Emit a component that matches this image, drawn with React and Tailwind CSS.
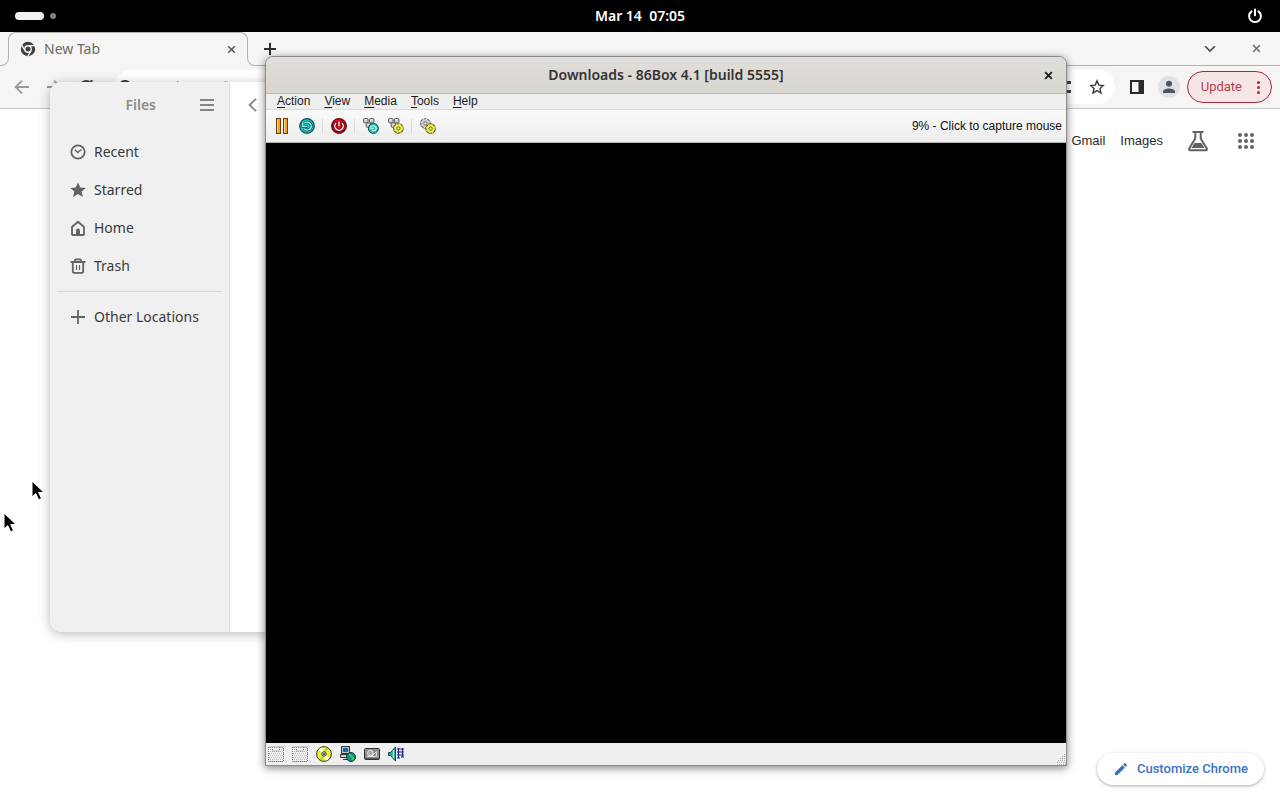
const UI = "font-['Noto_Sans',sans-serif]"
const QT = "font-['Liberation_Sans',Arial,sans-serif]"

function ChromeLogo() {
  return (
    <svg viewBox="0 0 16 16" className="w-4 h-4 shrink-0">
      <circle cx="8" cy="8" r="7.2" fill="#3c4043" />
      <circle cx="8" cy="8" r="3.9" fill="#f6f5f4" />
      <circle cx="8" cy="8" r="2.5" fill="#3c4043" />
      <path d="M8 4.6h6.6M5.1 9.8 1.8 4.2M11 9.8 7.8 15.2" stroke="#f6f5f4" strokeWidth="1.3" />
    </svg>
  )
}

function Cross({ className, width = 2 }) {
  return (
    <svg viewBox="0 0 10 10" className={className} fill="none" stroke="currentColor" strokeWidth={width}>
      <path d="M1.3 1.3l7.4 7.4M8.7 1.3 1.3 8.7" />
    </svg>
  )
}

function Pointer({ className }) {
  return (
    <svg viewBox="0 0 14 22" className={className}>
      <path d="M1 1v16l3.8-3.4 2.8 6.2 2.9-1.3-2.8-6H13z" fill="#000" stroke="#fff" strokeWidth="1" />
    </svg>
  )
}

function TopBar() {
  return (
    <header className="relative flex h-8 shrink-0 items-center justify-between bg-black px-4 text-white">
      <button aria-label="Activities" className="flex items-center gap-1.5">
        <span className="-ml-px h-2 w-[29px] rounded-full bg-[#f2f2f2]" />
        <span className="h-1.5 w-1.5 rounded-full bg-[#7f7f7f]" />
      </button>
      <button className="absolute left-1/2 -translate-x-1/2 whitespace-pre text-sm font-semibold">Mar 14  07:05</button>
      <button aria-label="System" className="mr-px">
        <svg viewBox="0 0 16 16" className="h-4 w-4" fill="none" stroke="currentColor" strokeWidth="2" strokeLinecap="round">
          <path d="M4.6 3.4a5.9 5.9 0 1 0 6.8 0M8 1.6v5.6" />
        </svg>
      </button>
    </header>
  )
}

function TabStrip() {
  return (
    <div className="flex h-[34px] shrink-0 bg-[#f6f5f4]">
      <span className="-mr-px h-2 w-[9px] self-end rounded-br-lg border-b border-r border-[#b3b0ad]" />
      <div className="flex h-[26px] w-[240px] items-start rounded-t-lg border-x border-t border-[#b3b0ad]">
        <div className="flex h-8 w-full items-center pl-[11px] pr-[11px]">
          <ChromeLogo />
          <span className="ml-2 flex-1 text-sm text-[#6a6a6a]">New Tab</span>
          <button aria-label="Close tab" className="text-[#555]"><Cross className="h-[9px] w-[9px]" width={1.6} /></button>
        </div>
      </div>
      <span className="-ml-px h-2 w-2 self-end rounded-bl-lg border-b border-l border-[#b3b0ad]" />
      <div className="flex flex-1 items-center justify-between border-b border-[#b3b0ad] pl-[9px] pr-[19px]">
        <button aria-label="New tab">
          <svg viewBox="0 0 12 12" className="h-3 w-3" stroke="#2e2e2e" strokeWidth="2"><path d="M6 0v12M0 6h12" /></svg>
        </button>
        <div className="flex items-center gap-9">
          <button aria-label="Search tabs">
            <svg viewBox="0 0 12 8" className="h-2 w-3" fill="none" stroke="#4a4a4a" strokeWidth="1.6"><path d="M1.2 1.2 6 6l4.8-4.8" /></svg>
          </button>
          <button aria-label="Close window" className="text-[#7b7b7b]"><Cross className="h-[9px] w-[9px]" width={1.8} /></button>
        </div>
      </div>
    </div>
  )
}

function Toolbar() {
  return (
    <div className="flex h-[43px] shrink-0 items-center border-b border-[#c9c7c5] bg-[#f6f5f4] pl-3.5 pr-2">
      <div className="flex gap-4 text-[#9a9996]">
        <button aria-label="Back">
          <svg viewBox="0 0 16 16" className="h-4 w-4" fill="none" stroke="currentColor" strokeWidth="1.8"><path d="M15 8H2M8 1.6 1.6 8 8 14.4" /></svg>
        </button>
        <button aria-label="Forward">
          <svg viewBox="0 0 16 16" className="h-4 w-4" fill="none" stroke="currentColor" strokeWidth="1.8"><path d="M1 8h13M8 1.6 14.4 8 8 14.4" /></svg>
        </button>
        <button aria-label="Reload" className="text-[#3c4043]">
          <svg viewBox="0 0 16 16" className="h-4 w-4" fill="none" stroke="currentColor" strokeWidth="2"><path d="M13.5 10.5A6 6 0 1 1 12.5 4M13.5 1v4.6H9" /></svg>
        </button>
      </div>
      <label className="ml-5 flex h-[34px] flex-1 items-center rounded-full bg-white pl-1 pr-2.5">
        <svg viewBox="0 0 14 14" className="h-3.5 w-3.5" fill="none" stroke="#3c4043" strokeWidth="2"><path d="M11.5 3.2A5.6 5.6 0 1 0 12.6 7H7.4" /></svg>
        <input aria-label="Address" placeholder="Search Google or type a URL" className="ml-2 min-w-0 flex-1 bg-transparent text-sm outline-none placeholder:text-[#80868b]" />
        <svg viewBox="0 0 14 16" className="mr-[18px] h-4 w-3.5" fill="none" stroke="#444" strokeWidth="3"><path d="M3 3.5h11M3 12.5h11" /></svg>
        <button aria-label="Bookmark this tab">
          <svg viewBox="0 0 16 16" className="h-4 w-4" fill="none" stroke="#3c3c3c" strokeWidth="1.4">
            <path d="M8 1.9l1.8 4.2 4.6.4-3.5 3 1.1 4.5L8 11.6 4 14l1.1-4.5-3.5-3 4.6-.4z" />
          </svg>
        </button>
      </label>
      <button aria-label="Side panel" className="ml-[15px]">
        <svg viewBox="0 0 14 14" className="h-3.5 w-3.5"><path d="M0 0h14v14H0zM2 2v10h6.5V2z" fill="#2b2b2b" fillRule="evenodd" /></svg>
      </button>
      <button aria-label="Profile" className="ml-3.5 flex h-[22px] w-[22px] items-center justify-center rounded-full bg-[#dfe1e5]">
        <svg viewBox="0 0 14 14" className="h-3.5 w-3.5" fill="#50555c"><circle cx="7" cy="3.8" r="3" /><path d="M1 13v-1.6C1 9.3 4.4 8.4 7 8.4s6 .9 6 3V13z" /></svg>
      </button>
      <button className="ml-[7px] flex h-8 items-center gap-[15px] rounded-full border border-[#a5283c] bg-[#f5e6e5] pl-[13px] pr-[11px] font-['Roboto',sans-serif] text-[13px] text-[#b3404f]">
        Update
        <svg viewBox="0 0 3 13" className="h-[13px] w-[3px]" fill="#a5283c"><circle cx="1.5" cy="1.5" r="1.5" /><circle cx="1.5" cy="6.5" r="1.5" /><circle cx="1.5" cy="11.5" r="1.5" /></svg>
      </button>
    </div>
  )
}

function NewTabPage() {
  return (
    <main className="flex flex-1 flex-col items-end justify-between bg-white pb-[15px] pr-4">
      <nav className={`flex items-center pr-[9px] pt-[21px] text-[13px] text-[#2a2a2a] ${QT}`}>
        <a href="#gmail" className="mr-[15px]">Gmail</a>
        <a href="#images">Images</a>
        <a href="#labs" aria-label="Search Labs" className="ml-6">
          <svg viewBox="0 0 22 22" className="h-[22px] w-[22px]" fill="none" stroke="#5f6368" strokeWidth="2" strokeLinejoin="round">
            <path d="M5.5 2h11M8.3 2v6.5L2.2 18.4c-.5 1 0 1.9 1 1.9h15.6c1 0 1.5-.9 1-1.9L13.7 8.5V2" />
            <path d="M7.6 13h6.8l3.2 5H4.4z" fill="#5f6368" stroke="none" />
          </svg>
        </a>
        <button aria-label="Google apps" className="ml-7">
          <svg viewBox="0 0 18 18" className="h-[18px] w-[18px]" fill="#5f6368">
            {[3, 9, 15].map(y => [3, 9, 15].map(x => <circle key={`${x}-${y}`} cx={x} cy={y} r="2" />))}
          </svg>
        </button>
      </nav>
      <button className="flex h-8 items-center gap-2 rounded-full bg-white px-4 font-['Roboto',sans-serif] text-[13px] font-medium text-[#3a72c4] shadow-[0_1px_3px_rgba(0,0,0,0.35)]">
        <svg viewBox="0 0 24 24" className="h-4 w-4" fill="currentColor"><path d="M3 17.25V21h3.75L17.8 9.94l-3.75-3.75zM20.7 7.04a1 1 0 0 0 0-1.41l-2.34-2.34a1 1 0 0 0-1.41 0l-1.83 1.83 3.75 3.75z" /></svg>
        Customize Chrome
      </button>
    </main>
  )
}

const places = [
  ['Recent', <g><circle cx="8" cy="8" r="6.7" /><path d="M4.8 5.8 7.8 8.6l3.6-3.2" strokeWidth="1.3" /></g>],
  ['Starred', <path d="M8 .4l2.3 5 5.5.5-4.2 3.6 1.3 5.5L8 12.1 3.1 15l1.3-5.5L.2 5.9l5.5-.5z" fill="currentColor" stroke="none" />],
  ['Home', <g><path d="M2 14.2V7l6-5.2L14 7v7.2c0 .4-.3.8-.8.8H2.8c-.5 0-.8-.4-.8-.8z" strokeLinejoin="round" /><path d="M6 15v-4.6a2 2 0 0 1 4 0V15z" fill="currentColor" stroke="none" /></g>],
  ['Trash', <g><path d="M.6 4h14.8M5 4V2.4c0-.6.4-1 1-1h4c.6 0 1 .4 1 1V4M2.8 4v9.2c0 .9.7 1.6 1.6 1.6h7.2c.9 0 1.6-.7 1.6-1.6V4" /><path d="M6.5 7v5M9.5 7v5" strokeWidth="1.2" /></g>],
]

function Place({ label, children }) {
  return (
    <a href="#place" className="flex h-[38px] items-center gap-2 px-5 text-sm text-[#3a3a3a]">
      <svg viewBox="0 0 16 16" className="h-4 w-4 text-[#636363]" fill="none" stroke="currentColor" strokeWidth="1.8">{children}</svg>
      {label}
    </a>
  )
}

function FilesWindow() {
  return (
    <section aria-label="Files" className="absolute bottom-[168px] left-[50px] right-[260px] top-[82px] flex overflow-hidden rounded-xl bg-white shadow-[0_2px_12px_rgba(0,0,0,0.28)]">
      <aside className="w-[180px] border-r border-[#dedede] bg-[#f0f0f0]">
        <div className="flex h-[46px] items-center justify-end gap-[44px] pr-[15px]">
          <h2 className="text-sm font-semibold text-[#8c8c8c]">Files</h2>
          <button aria-label="Main menu">
            <svg viewBox="0 0 14 12" className="h-3 w-3.5" stroke="#858585" strokeWidth="2"><path d="M0 1h14M0 6h14M0 11h14" /></svg>
          </button>
        </div>
        <nav className="pt-[5px]">
          {places.map(([label, icon]) => <Place key={label} label={label}>{icon}</Place>)}
          <hr className="mx-[7px] my-[6px] border-[#d6d6d6]" />
          <Place label="Other Locations"><path d="M8 1v14M1 8h14" /></Place>
        </nav>
      </aside>
      <button aria-label="Back" className="flex h-[46px] items-center pl-[18px]">
        <svg viewBox="0 0 9 14" className="h-3.5 w-[9px]" fill="none" stroke="#858585" strokeWidth="1.8"><path d="M8 .8 1.6 7 8 13.2" /></svg>
      </button>
    </section>
  )
}

function Gear({ x, y, fill, dark, light }) {
  return (
    <g>
      <circle cx={x} cy={y} r="4.7" fill={fill} stroke={dark} strokeWidth="1.1" />
      <circle cx={x} cy={y} r="4.2" fill="none" stroke={light} strokeWidth="1" strokeDasharray="1.6 1.7" />
      <circle cx={x} cy={y} r="1.6" fill="#fff" stroke={dark} strokeWidth="0.9" />
    </g>
  )
}

function Keycaps() {
  return (
    <g stroke="#4a4a4a" strokeWidth="0.9" fill="#c9c9c9">
      <rect x="0.5" y="0.5" width="4.6" height="4.4" rx="1.2" />
      <rect x="6.4" y="0.5" width="4.6" height="4.4" rx="1.2" />
      <rect x="3.2" y="5" width="4.6" height="4.4" rx="1.2" />
      <path d="M1.6 1.8h2M7.5 1.8h2M4.3 6.3h2" stroke="#fff" />
    </g>
  )
}

function ToolButton({ label, children }) {
  return (
    <button aria-label={label} className="flex h-6 w-6 items-center justify-center">
      <svg viewBox="0 0 16 16" className="h-4 w-4">{children}</svg>
    </button>
  )
}

function Separator() {
  return <span className="mx-[3px] h-3.5 w-0.5 border-l border-[#d9d9d9]" />
}

function EmuToolbar() {
  return (
    <div className="flex h-[33px] items-center justify-between border-b border-[#b5b5b5] bg-linear-to-b from-[#fafafa] to-[#ededed] px-1">
      <div className="flex items-center">
        <div className="flex gap-px">
          <ToolButton label="Pause">
            <rect x="2.5" y="0.5" width="4" height="15" fill="#f2a227" stroke="#6b3c08" />
            <rect x="9.5" y="0.5" width="4" height="15" fill="#f2a227" stroke="#6b3c08" />
            <path d="M3.5 1.5v13M10.5 1.5v13" stroke="#ffd77c" />
          </ToolButton>
          <ToolButton label="Hard reset">
            <circle cx="8" cy="8" r="7.3" fill="#22c0bd" stroke="#0b4f55" strokeWidth="1.2" />
            <path d="M3.8 4.2v4.2h4.6M5.4 4.8c3-1.8 6.9 0 6.9 3.4 0 3.6-4.6 5-7.4 2.6" fill="none" stroke="#0a555b" strokeWidth="2.8" />
            <path d="M3.8 4.2v4.2h4.6M5.4 4.8c3-1.8 6.9 0 6.9 3.4 0 3.6-4.6 5-7.4 2.6" fill="none" stroke="#a5f5f2" strokeWidth="1.3" />
          </ToolButton>
        </div>
        <Separator />
        <ToolButton label="ACPI shutdown">
          <circle cx="8" cy="8" r="7.3" fill="#cf1020" stroke="#5c0710" strokeWidth="1.3" />
          <path d="M5 5.2a4.2 4.2 0 1 0 6 0M8 3.4v4.8" fill="none" stroke="#6b0711" strokeWidth="3" />
          <path d="M5 5.2a4.2 4.2 0 1 0 6 0M8 3.4v4.8" fill="none" stroke="#fff" strokeWidth="1.4" />
        </ToolButton>
        <Separator />
        <div className="flex gap-px">
          <ToolButton label="Ctrl+Alt+Del">
            <Keycaps />
            <circle cx="10.4" cy="10.4" r="5" fill="#22c0bd" stroke="#0b4f55" />
            <path d="M8 7.8v2.6h2.8M9.2 8.2c1.9-1 4 .2 4 2.3 0 2.2-2.8 3-4.4 1.5" fill="none" stroke="#c9fbf8" strokeWidth="1.1" />
          </ToolButton>
          <ToolButton label="Ctrl+Alt+Esc">
            <Keycaps />
            <Gear x={10.4} y={10.4} fill="#f5f02a" dark="#4d4a0c" light="#ffff9a" />
          </ToolButton>
        </div>
        <Separator />
        <ToolButton label="Settings">
          <Gear x={5.4} y={5.4} fill="#cfcfcf" dark="#555" light="#fff" />
          <Gear x={10.6} y={10.6} fill="#f5f02a" dark="#4d4a0c" light="#ffff9a" />
        </ToolButton>
      </div>
      <span className="text-xs text-[#111]">9% - Click to capture mouse</span>
    </div>
  )
}

function EmptyFloppy() {
  return (
    <g fill="none" stroke="#777" strokeDasharray="1 1">
      <path d="M0 1.5h16M0 3.5h3M13 3.5h3M0 5.5h16M1 7.5h15M0 9.5h16M1 11.5h15M0 13.5h16M1 15.5h14" stroke="#bbb" />
      <path d="M.5 1v14.5h15V1zM4.5 1v4h7V1" />
    </g>
  )
}

const devices = [
  ['Floppy 1', <EmptyFloppy />],
  ['Floppy 2', <EmptyFloppy />],
  ['CD-ROM', <g>
    <circle cx="8" cy="8" r="7.4" fill="#eeee3c" stroke="#3b3b10" />
    <path d="M8 8 2.6 4A6.8 6.8 0 0 1 6 1.5zM8 8l5.4 4a6.8 6.8 0 0 1-3.4 2.5z" fill="#fff" />
    <path d="M8 8l2-6.5A6.8 6.8 0 0 1 12 2.8zM8 8l-2 6.5A6.8 6.8 0 0 1 4 13.2z" fill="#8fd04a" />
    <circle cx="8" cy="8" r="2.2" fill="#fff" stroke="#333" /><circle cx="8" cy="8" r="1" fill="#222" />
  </g>],
  ['Network', <g>
    <path d="M1.5.5h8v7h-8z" fill="#b9c3c9" stroke="#333" /><path d="M3 2h5v4H3z" fill="#176aa5" />
    <path d="M.5 8.5h8v3h-8zM3 13.5h4" fill="#ccc" stroke="#333" />
    <circle cx="11" cy="11" r="4.5" fill="#159084" stroke="#073e38" /><path d="M9 8.5c2 0 1.5 2 3 2.5s1 2 0 3" fill="none" stroke="#45d34b" strokeWidth="1.6" />
  </g>],
  ['Hard disk', <g>
    <rect x="0.5" y="2.5" width="15" height="11" rx="1" fill="#8c8c8c" stroke="#333" />
    <circle cx="6.3" cy="7" r="2.8" fill="#aaa" stroke="#e4e4e4" /><path d="M8 10l4.5-4.5v5H3" fill="none" stroke="#ddd" /><path d="M1 12.5h14" stroke="#555" />
  </g>],
  ['Sound', <g>
    <path d="M.5 6.5h2l5-5.5v14l-5-5.5h-2z" fill="#28a99c" stroke="#0c4744" /><path d="M5.5 4v8" stroke="#9ff0de" strokeWidth="1.4" />
    <path d="M10.5 2v10M14.5 2v9M9 3h7M9 6h7M9 9h7M9 12h3M13 11h3" stroke="#20248e" strokeWidth="1.2" />
  </g>],
]

function EmulatorWindow() {
  return (
    <section aria-label="86Box" className="absolute bottom-[34px] left-[265px] right-[213px] top-14 flex flex-col overflow-hidden rounded-t-lg border border-[#8d8a87] bg-[#efefef] shadow-[0_2px_8px_rgba(0,0,0,0.5)]">
      <div className="relative flex h-9 shrink-0 items-center justify-center bg-linear-to-b from-[#e1dedb] to-[#d9d5d0]">
        <h1 className="text-sm font-semibold text-[#333]">Downloads - 86Box 4.1 [build 5555]</h1>
        <button aria-label="Close" className="absolute right-[13px] text-[#222]"><Cross className="h-[9px] w-[9px]" width={2.2} /></button>
      </div>
      <div className={`flex flex-1 flex-col ${QT}`}>
        <div className="flex h-[17px] items-start border-b border-t border-b-[#dcdcdc] border-t-[#b8b5b2] pl-1 text-xs text-[#1a1a1a]">
          {['Action', 'View', 'Media', 'Tools', 'Help'].map(m => (
            <button key={m} className="px-[7px] leading-[14px]"><span className="underline underline-offset-2">{m[0]}</span>{m.slice(1)}</button>
          ))}
        </div>
        <EmuToolbar />
        <div className="flex-1 bg-black" />
        <footer className="flex h-[22px] items-center gap-2 pl-0.5">
          {devices.map(([name, icon]) => (
            <svg key={name} role="img" aria-label={name} viewBox="0 0 16 16" className="h-4 w-4">{icon}</svg>
          ))}
          <svg viewBox="0 0 9 12" className="ml-auto h-3 w-[9px] self-end" stroke="#aaa" strokeDasharray="1 1"><path d="M7 1.5h2M5 3.5h4M3 5.5h6M1 7.5h8M0 9.5h9M0 11.5h9" /></svg>
        </footer>
      </div>
    </section>
  )
}

export default function App() {
  return (
    <div className={`relative flex h-screen flex-col overflow-hidden bg-white ${UI}`}>
      <TopBar />
      <TabStrip />
      <Toolbar />
      <NewTabPage />
      <FilesWindow />
      <EmulatorWindow />
      <Pointer className="absolute left-[31px] top-[480px] h-[22px] w-3.5" />
      <Pointer className="absolute left-[3px] top-[512px] h-[22px] w-3.5" />
    </div>
  )
}
